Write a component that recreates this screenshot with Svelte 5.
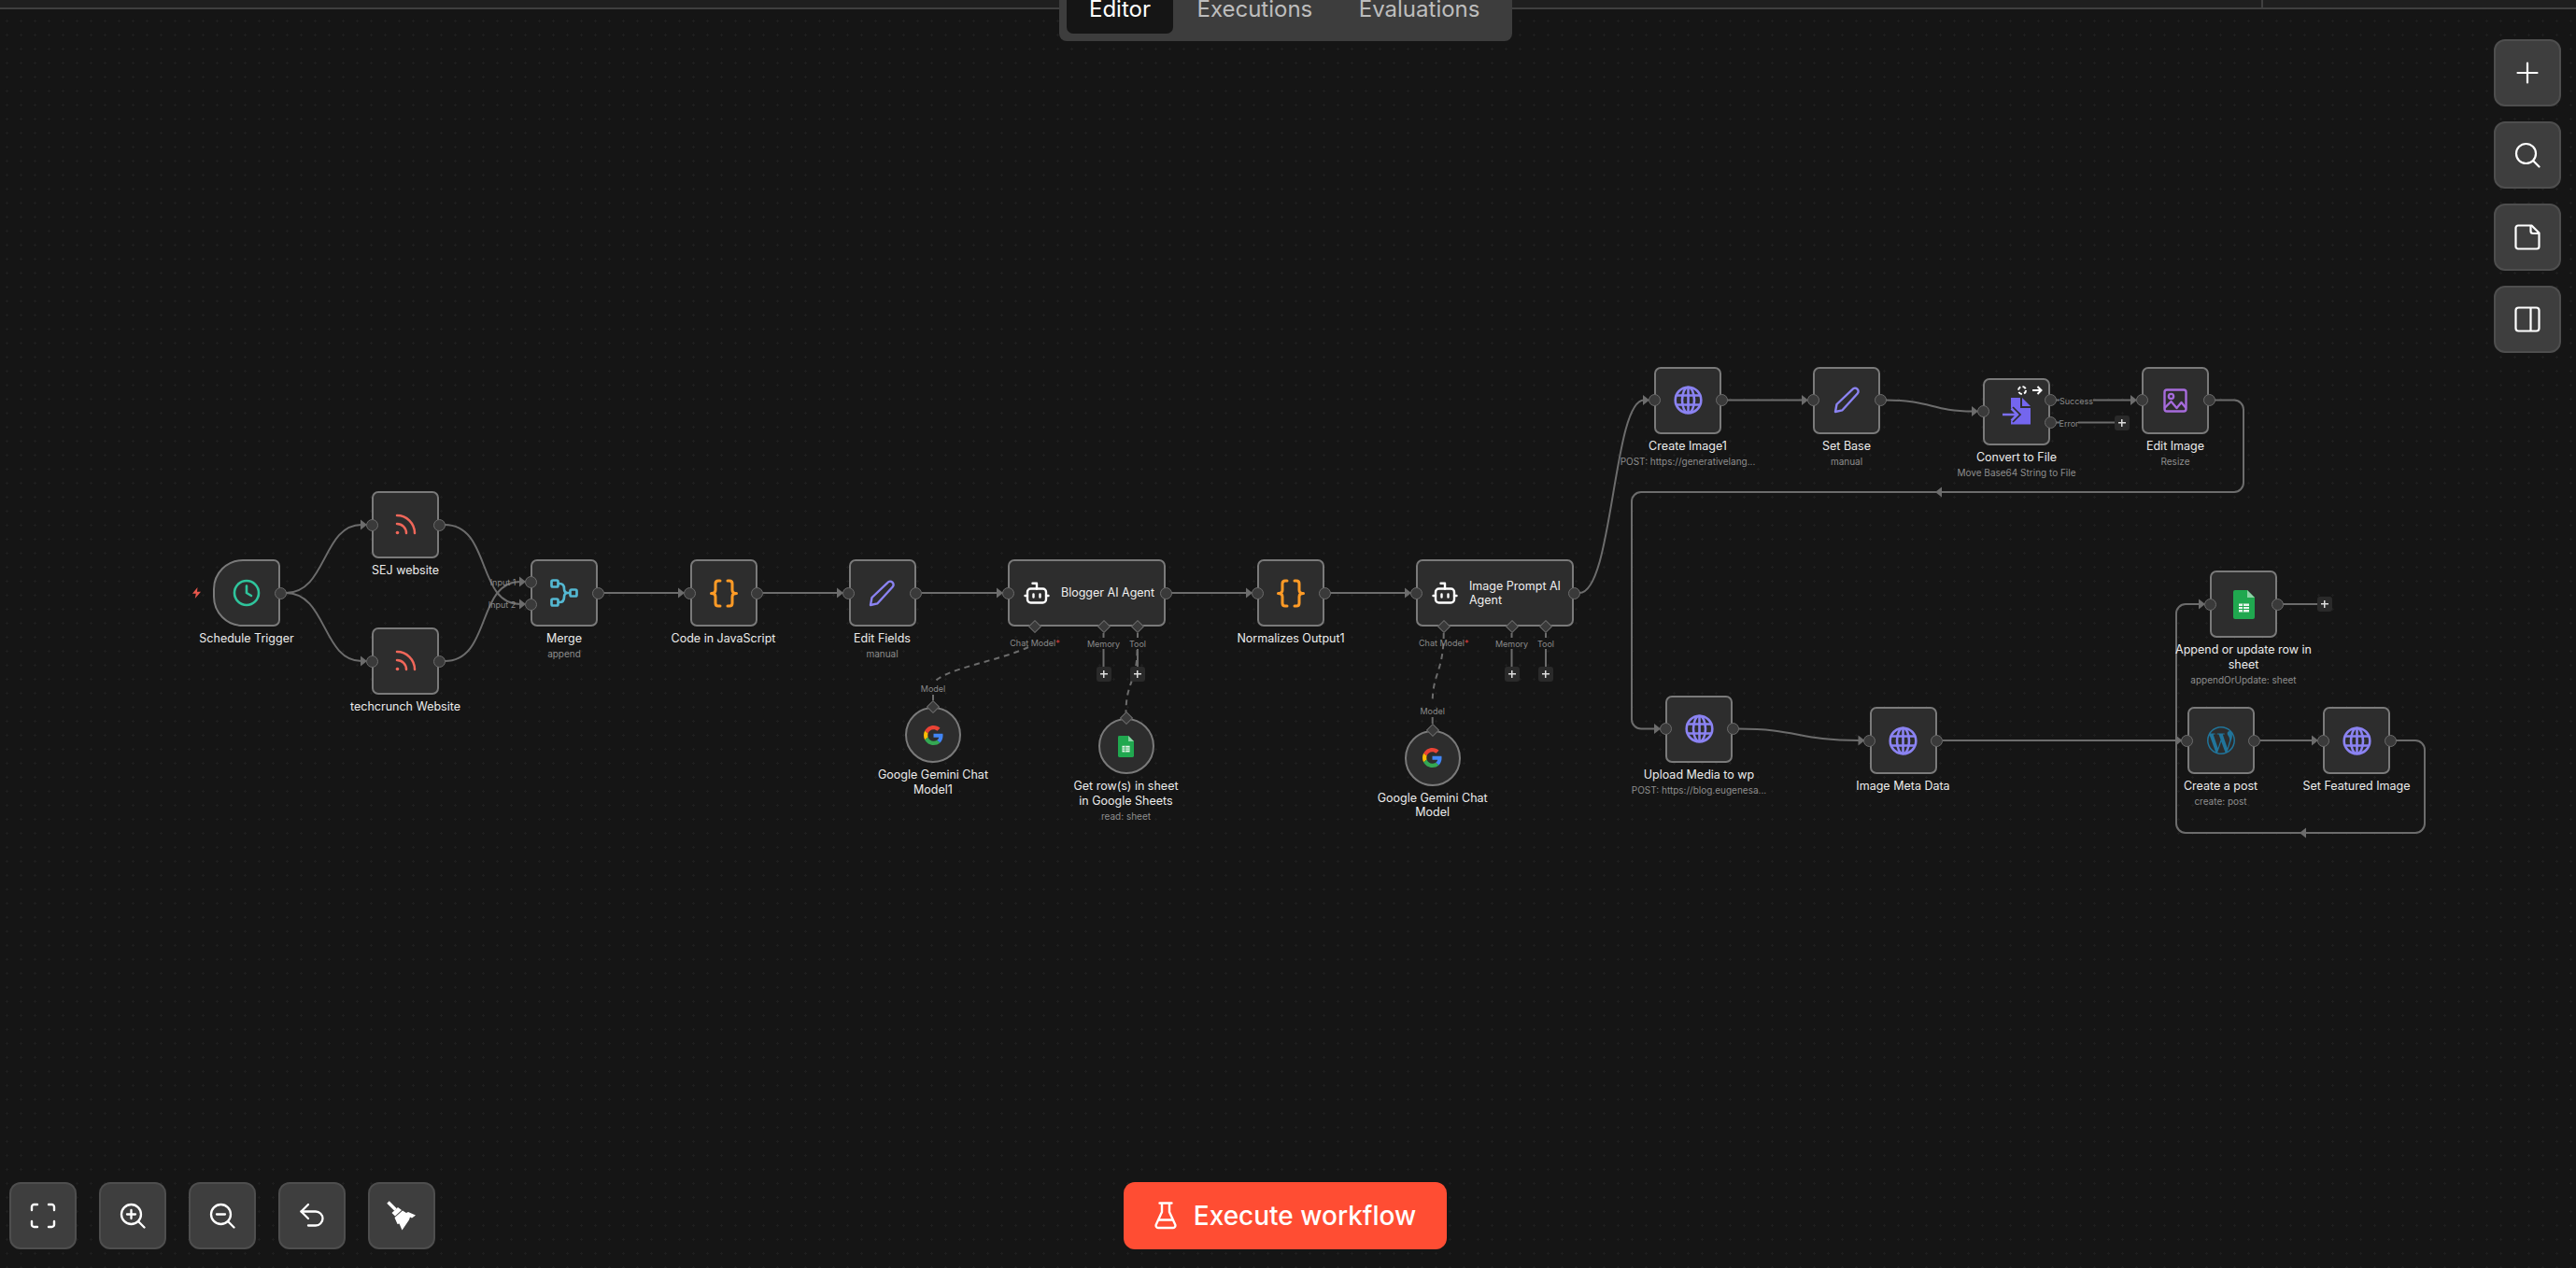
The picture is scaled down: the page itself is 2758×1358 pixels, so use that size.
<script>
  const nodes = [
    { name: "Schedule Trigger", x: 228, y: 599, icon: "clock", trigger: true, noIn: true },
    { name: "SEJ website", x: 398, y: 526, icon: "rss" },
    { name: "techcrunch Website", x: 398, y: 672, icon: "rss" },
    { name: "Merge", sub: "append", x: 568, y: 599, icon: "merge", ins: [24, 48] },
    { name: "Code in JavaScript", x: 738.5, y: 599, icon: "code" },
    { name: "Edit Fields", sub: "manual", x: 908.5, y: 599, icon: "pen" },
    { name: "Blogger AI Agent", x: 1079, y: 599, w: 169, agent: true, subs: [29, 102.5, 138.5] },
    { name: "Normalizes Output1", x: 1346, y: 599, icon: "code" },
    { name: "Image Prompt AI\nAgent", x: 1516, y: 599, w: 169, agent: true, subs: [29.5, 102.5, 139] },
    { name: "Create Image1", sub: "POST: https://generativelang...", x: 1771, y: 392.5, icon: "globe" },
    { name: "Set Base", sub: "manual", x: 1941, y: 392.5, icon: "pen" },
    { name: "Convert to File", sub: "Move Base64 String to File", x: 2123, y: 404.5, icon: "convert", outs: [24, 48], busy: true },
    { name: "Edit Image", sub: "Resize", x: 2293, y: 392.5, icon: "image" },
    { name: "Upload Media to wp", sub: "POST: https://blog.eugenesa...", x: 1783, y: 744.5, icon: "globe" },
    { name: "Image Meta Data", x: 2001.5, y: 757, icon: "globe" },
    { name: "Append or update row in\nsheet", sub: "appendOrUpdate: sheet", x: 2366, y: 611, icon: "sheets" },
    { name: "Create a post", sub: "create: post", x: 2341.5, y: 757, icon: "wp" },
    { name: "Set Featured Image", x: 2487, y: 757, icon: "globe" },
    { name: "Google Gemini Chat\nModel1", x: 969, y: 757, icon: "google", circle: true },
    { name: "Get row(s) in sheet\nin Google Sheets", sub: "read: sheet", x: 1175.5, y: 769, icon: "sheetsSm", circle: true },
    { name: "Google Gemini Chat\nModel", x: 1503.7, y: 781.5, icon: "google", circle: true },
  ];

  const edges = [
    "M306 635 C350 635 345 562 387 562",
    "M306 635 C350 635 345 708 387 708",
    "M476 562 C526 562 510 647 557 647",
    "M476 708 C526 708 510 623 557 623",
    "M647 635 H727",
    "M817 635 H897",
    "M987 635 H1068",
    "M1254 635 H1335",
    "M1424 635 H1505",
    "M1691 635 C1727 635 1727 428.5 1760 428.5",
    "M1849 428.5 H1930",
    "M2019 428.5 C2068 428.5 2068 440.5 2112 440.5",
    "M2241 428.5 H2282",
    "M2225 452.5 H2264",
    "M2371 428.5 H2392 a10 10 0 0 1 10 10 V517 a10 10 0 0 1 -10 10 H1757 a10 10 0 0 0 -10 10 V770.5 a10 10 0 0 0 10 10 H1772",
    "M1861 780.5 C1925 780.5 1925 793 1990 793",
    "M2080 793 H2330",
    "M2420 793 H2476",
    "M2444 647 H2481",
    "M2565 793 H2586 a10 10 0 0 1 10 10 V882 a10 10 0 0 1 -10 10 H2340 a10 10 0 0 1 -10 -10 V657 a10 10 0 0 1 10 -10 H2355",
    "M1181.5 678 V683 M1181.5 695 V714",
    "M1218 678 V683 M1218 695 V714",
    "M1618.5 678 V683 M1618.5 695 V714",
    "M1655 678 V683 M1655 695 V714",
    "M999 744 V750",
    "M1533.7 768 V775",
    "M2201 428.5 H2205",
    "M2201 452.5 H2205",
  ];

  const dashed = [
    "M1101 693 C1070 708 1010 716 999 732",
    "M1217.5 696 C1217.5 730 1205.5 730 1205.5 763",
    "M1545.7 678 C1545.7 720 1533.7 720 1533.7 753",
  ];

  // arrow tips, dir 1 = pointing right, -1 = left
  const arrows = [
    [393, 562, 1], [393, 708, 1], [563, 623, 1], [563, 647, 1],
    [733, 635, 1], [903, 635, 1], [1074, 635, 1], [1341, 635, 1], [1511, 635, 1],
    [1766, 428.5, 1], [1936, 428.5, 1], [2118, 440.5, 1], [2288, 428.5, 1],
    [1778, 780.5, 1], [1996.5, 793, 1], [2336.5, 793, 1], [2482, 793, 1], [2361, 647, 1],
    [2072, 527, -1], [2462, 892, -1],
  ];

  const portLabels = [
    { t: "Input 1", x: 538.5, y: 623 },
    { t: "Input 2", x: 537.5, y: 647 },
    { t: "Chat Model", star: true, x: 1108, y: 688 },
    { t: "Memory", x: 1181.5, y: 689 },
    { t: "Tool", x: 1218, y: 689 },
    { t: "Model", x: 999, y: 737 },
    { t: "Chat Model", star: true, x: 1545.7, y: 688 },
    { t: "Memory", x: 1618.5, y: 689 },
    { t: "Tool", x: 1655, y: 689 },
    { t: "Model", x: 1533.7, y: 761 },
    { t: "Success", x: 2223, y: 428.5 },
    { t: "Error", x: 2215, y: 452.5 },
  ];

  const plusBoxes = [
    [1181.5, 722], [1218, 722], [1618.5, 722], [1655, 722], [2272, 452.5], [2489, 647],
  ];

  const tabs = ["Editor", "Executions", "Evaluations"];
</script>

{#snippet icon(name)}
  {#if name === "clock"}
    <svg width="30" height="30" viewBox="0 0 30 30" fill="none" stroke="#2fc49c" stroke-width="2.6" stroke-linecap="round" stroke-linejoin="round"><circle cx="15" cy="15" r="13"/><path d="M15 7.5V15l5 3"/></svg>
  {:else if name === "rss"}
    <svg width="24" height="24" viewBox="0 0 24 24" fill="none" stroke="#f0675a" stroke-width="2.5" stroke-linecap="round"><path d="M3 11a10 10 0 0 1 10 10"/><path d="M3 2a19 19 0 0 1 19 19"/><circle cx="3.5" cy="20.5" r="1.8" fill="#f0675a" stroke="none"/></svg>
  {:else if name === "merge"}
    <svg width="30" height="30" viewBox="0 0 30 30" fill="none" stroke="#54b8d2" stroke-width="2.7" stroke-linejoin="round"><rect x="1.5" y="1.5" width="7" height="7" rx="1.5"/><rect x="1.5" y="21.5" width="7" height="7" rx="1.5"/><rect x="21.5" y="11.5" width="7" height="7" rx="1.5"/><path d="M8.5 5h1.5c3.500 0 5 2.500 5 5.500 0 2.800 1.500 4.500 4 4.500h2.500M8.500 25h1.500c3.500 0 5-2.500 5-5.500 0-2.800 1.500-4.500 4-4.500"/></svg>
  {:else if name === "code"}
    <svg width="30" height="31" viewBox="0 0 30 31" fill="none" stroke="#ff9b26" stroke-width="3" stroke-linecap="round" stroke-linejoin="round"><path d="M11 2H9C7 2 6 3 6 5v7c0 2-1.500 3.500-4.500 3.500C4.500 15.500 6 17 6 19v7c0 2 1 3 3 3h2"/><path d="M19 2h2c2 0 3 1 3 3v7c0 2 1.500 3.500 4.500 3.500C25.500 15.500 24 17 24 19v7c0 2-1 3-3 3h-2"/></svg>
  {:else if name === "pen"}
    <svg width="29" height="29" viewBox="0 0 29 29" fill="none" stroke="#8b83f2" stroke-width="2.4" stroke-linejoin="round"><path d="M2 27l1.500-8L20.500 2.800a3.500 3.500 0 0 1 5.200 4.700L9.500 25.300z"/></svg>
  {:else if name === "globe"}
    <svg width="31" height="31" viewBox="0 0 31 31" fill="none" stroke="#8b83f2" stroke-width="2.6"><circle cx="15.500" cy="15.500" r="13.800"/><ellipse cx="15.500" cy="15.500" rx="6.500" ry="13.800"/><path d="M15.500 2v27M3 10.500h25M3 20.500h25"/></svg>
  {:else if name === "image"}
    <svg width="26" height="26" viewBox="0 0 26 26" fill="none" stroke="#a66bdc" stroke-width="2.4" stroke-linejoin="round"><rect x="1.500" y="1.500" width="23" height="23" rx="2.500"/><circle cx="8.500" cy="8.500" r="2.600"/><path d="M1.500 21l7-7 6 7 5-6 5 6"/></svg>
  {:else if name === "convert"}
    <svg width="32" height="29" viewBox="0 0 32 29"><path d="M10 0h10v11h11v17.500H10z" fill="#7466ee"/><path d="M22 0l9 9h-9z" fill="#7466ee"/><path d="M1 18h15M10.500 11.500l6.500 6.500-6.500 6.500" fill="none" stroke="#2d2d2d" stroke-width="6"/><path d="M1 18h15M10.500 11.500l6.500 6.500-6.500 6.500" fill="none" stroke="#7b6ef2" stroke-width="2.600"/></svg>
  {:else if name === "sheets"}
    <svg width="23" height="31" viewBox="0 0 23 31"><path d="M2 0h13l8 8v21a2 2 0 0 1-2 2H2a2 2 0 0 1-2-2V2a2 2 0 0 1 2-2z" fill="#20a84f"/><path d="M15 0l8 8h-8z" fill="#8ed3a6"/><path d="M6 14.500h11v9H6z" fill="#e8f5ec"/><path d="M6 17.500h11M6 20.500h11M10.500 14.500v9" stroke="#20a84f" stroke-width="1"/></svg>
  {:else if name === "sheetsSm"}
    <svg width="17" height="23" viewBox="0 0 23 31"><path d="M2 0h13l8 8v21a2 2 0 0 1-2 2H2a2 2 0 0 1-2-2V2a2 2 0 0 1 2-2z" fill="#20a84f"/><path d="M15 0l8 8h-8z" fill="#8ed3a6"/><path d="M6 14.500h11v9H6z" fill="#e8f5ec"/><path d="M6 17.500h11M6 20.500h11M10.500 14.500v9" stroke="#20a84f" stroke-width="1"/></svg>
  {:else if name === "wp"}
    <svg width="30" height="30" viewBox="0 0 24 24" fill="#21759b"><path d="M21.469 6.825c.84 1.537 1.318 3.3 1.318 5.175 0 3.979-2.156 7.456-5.363 9.325l3.295-9.527c.615-1.54.82-2.771.82-3.864 0-.405-.026-.78-.07-1.11m-7.981.105c.647-.03 1.232-.105 1.232-.105.582-.075.514-.93-.067-.899 0 0-1.755.135-2.88.135-1.064 0-2.85-.15-2.85-.15-.585-.03-.661.855-.075.885 0 0 .54.061 1.125.09l1.68 4.605-2.37 7.08L5.354 6.9c.649-.03 1.234-.1 1.234-.1.585-.075.516-.93-.065-.896 0 0-1.746.138-2.874.138-.2 0-.438-.008-.69-.015C4.911 3.15 8.235 1.215 12 1.215c2.809 0 5.365 1.072 7.286 2.833-.046-.003-.091-.009-.141-.009-1.06 0-1.812.923-1.812 1.914 0 .89.513 1.643 1.06 2.531.411.72.89 1.643.89 2.977 0 .915-.354 1.994-.821 3.479l-1.075 3.585-3.9-11.61.001.014zM12 22.784c-1.059 0-2.081-.153-3.048-.437l3.237-9.406 3.315 9.087c.024.053.05.101.078.149-1.12.393-2.325.609-3.582.609M1.211 12c0-1.564.336-3.05.935-4.39L7.29 21.709C3.694 19.96 1.212 16.271 1.211 12M12 0C5.385 0 0 5.385 0 12s5.385 12 12 12 12-5.385 12-12S18.615 0 12 0"/></svg>
  {:else if name === "google"}
    <svg width="21" height="21" viewBox="0 0 48 48"><path fill="#EA4335" d="M24 9.500c3.540 0 6.710 1.220 9.210 3.600l6.850-6.850C35.900 2.380 30.470 0 24 0 14.620 0 6.510 5.380 2.560 13.220l7.980 6.190C12.430 13.720 17.740 9.500 24 9.500z"/><path fill="#4285F4" d="M46.980 24.550c0-1.570-.15-3.090-.38-4.550H24v9.020h12.940c-.58 2.960-2.260 5.480-4.780 7.180l7.730 6c4.510-4.180 7.090-10.360 7.090-17.650z"/><path fill="#FBBC05" d="M10.530 28.590c-.48-1.450-.76-2.990-.76-4.590s.27-3.140.76-4.590l-7.980-6.190C.92 16.460 0 20.120 0 24c0 3.880.92 7.540 2.560 10.780l7.970-6.190z"/><path fill="#34A853" d="M24 48c6.480 0 11.930-2.130 15.890-5.810l-7.730-6c-2.150 1.450-4.920 2.300-8.160 2.300-6.260 0-11.570-4.220-13.470-9.910l-7.980 6.190C6.510 42.620 14.620 48 24 48z"/></svg>
  {:else if name === "robot"}
    <svg width="28" height="24" viewBox="0 0 28 24" fill="none" stroke="#fff" stroke-width="2.400" stroke-linecap="round" stroke-linejoin="round"><rect x="4" y="7.500" width="20" height="15" rx="3.500"/><path d="M14 7.500V1.800H9.500M1.500 15h2.500M24 15h2.500M10.500 13.500v3M17.500 13.500v3"/></svg>
  {/if}
{/snippet}

<div class="app">
  <div class="canvas">
    <svg class="edges" width="2758" height="1358" viewBox="0 0 2758 1358">
      {#each edges as d}
        <path {d} class="edge" />
      {/each}
      {#each dashed as d}
        <path {d} class="edge dash" />
      {/each}
      {#each arrows as [x, y, dir]}
        <polygon points="{x},{y} {x - 7 * dir},{y - 5.5} {x - 7 * dir},{y + 5.5}" class="arrow" />
      {/each}
    </svg>

    {#each nodes as n}
      <div
        class="node"
        class:circle={n.circle}
        class:trigger={n.trigger}
        class:agent={n.agent}
        style="left: {n.x}px; top: {n.y}px{n.w ? `; width: ${n.w}px` : ''}"
      >
        {#if n.agent}
          {@render icon("robot")}
          <span class="agent-name">{n.name}</span>
        {:else}
          {@render icon(n.icon)}
        {/if}

        {#if n.circle}
          <span class="diamond on-top"></span>
        {:else}
          {#if !n.noIn}
            {#each n.ins ?? [36] as top}
              <span class="port in" style="top: {top}px"></span>
            {/each}
          {/if}
          {#each n.outs ?? [36] as top}
            <span class="port out" style="top: {top}px"></span>
          {/each}
        {/if}
        {#each n.subs ?? [] as left}
          <span class="diamond on-bottom" style="left: {left}px"></span>
        {/each}

        {#if n.trigger}
          <svg class="bolt" width="11" height="12" viewBox="0 0 11 12"><path d="M6.500 0L1 6.800h3.800L3.800 12 10 4.800H6z" fill="#e8574c"/></svg>
        {/if}
        {#if n.busy}
          <div class="node-status">
            <svg width="12" height="12" viewBox="0 0 12 12" fill="none" stroke="#fff" stroke-width="2" stroke-dasharray="4 2.300"><circle cx="6" cy="6" r="4"/></svg>
            <svg width="12" height="12" viewBox="0 0 12 12" fill="none" stroke="#fff" stroke-width="2"><path d="M1 6h9M6.500 2l4 4-4 4"/></svg>
          </div>
        {/if}

        {#if !n.agent}
          <div class="caption">
            <div class="label">{n.name}</div>
            {#if n.sub}<div class="sub">{n.sub}</div>{/if}
          </div>
        {/if}
      </div>
    {/each}

    {#each portLabels as l}
      <span class="port-label" style="left: {l.x}px; top: {l.y}px">{l.t}{#if l.star}<i>*</i>{/if}</span>
    {/each}

    {#each plusBoxes as [x, y]}
      <span class="plus" style="left: {x}px; top: {y}px"></span>
    {/each}
  </div>

  <header class="topbar">
    <span class="divider"></span>
  </header>

  <nav class="tabs">
    {#each tabs as t, i}
      <div class="tab" class:active={i === 0}>{t}</div>
    {/each}
  </nav>

  <div class="tools-right">
    <button class="tool" aria-label="add">
      <svg width="28" height="28" viewBox="0 0 28 28" fill="none" stroke="#fff" stroke-width="2.200" stroke-linecap="round"><path d="M14 3.500v21M3.500 14h21"/></svg>
    </button>
    <button class="tool" aria-label="search">
      <svg width="28" height="28" viewBox="0 0 28 28" fill="none" stroke="#fff" stroke-width="2.200" stroke-linecap="round"><circle cx="12.500" cy="12.500" r="10.500"/><path d="M20.500 20.500l6 6"/></svg>
    </button>
    <button class="tool" aria-label="sticky note">
      <svg width="28" height="28" viewBox="0 0 28 28" fill="none" stroke="#fff" stroke-width="2.200" stroke-linejoin="round"><path d="M4 1.500h14.500l8 8V24a2.500 2.500 0 0 1-2.500 2.500H4A2.500 2.500 0 0 1 1.500 24V4A2.500 2.500 0 0 1 4 1.500z"/><path d="M17.500 1.500v6a2.500 2.500 0 0 0 2.500 2.500h6.500"/></svg>
    </button>
    <button class="tool" aria-label="panel">
      <svg width="28" height="28" viewBox="0 0 28 28" fill="none" stroke="#fff" stroke-width="2.200"><rect x="1.500" y="1.500" width="25" height="25" rx="3"/><path d="M17.500 1.500v25"/></svg>
    </button>
  </div>

  <div class="tools-left">
    <button class="tool" aria-label="fit">
      <svg width="28" height="28" viewBox="0 0 28 28" fill="none" stroke="#fff" stroke-width="2.400" stroke-linecap="round"><path d="M2 8V4.500A2.500 2.500 0 0 1 4.500 2H8M20 2h3.500A2.500 2.500 0 0 1 26 4.500V8M26 20v3.500a2.500 2.500 0 0 1-2.500 2.500H20M8 26H4.500A2.500 2.500 0 0 1 2 23.500V20"/></svg>
    </button>
    <button class="tool" aria-label="zoom in">
      <svg width="28" height="28" viewBox="0 0 28 28" fill="none" stroke="#fff" stroke-width="2.300" stroke-linecap="round"><circle cx="12.500" cy="12.500" r="10.500"/><path d="M20.500 20.500l6 6M12.500 8v9M8 12.500h9"/></svg>
    </button>
    <button class="tool" aria-label="zoom out">
      <svg width="28" height="28" viewBox="0 0 28 28" fill="none" stroke="#fff" stroke-width="2.300" stroke-linecap="round"><circle cx="12.500" cy="12.500" r="10.500"/><path d="M20.500 20.500l6 6M8 12.500h9"/></svg>
    </button>
    <button class="tool" aria-label="undo">
      <svg width="28" height="28" viewBox="0 0 28 28" fill="none" stroke="#fff" stroke-width="2.300" stroke-linecap="round" stroke-linejoin="round"><path d="M10 2L2.500 9.500 10 17"/><path d="M2.500 9.500H18a7.500 7.500 0 0 1 0 15H10"/></svg>
    </button>
    <button class="tool" aria-label="tidy up">
      <svg width="32" height="32" viewBox="0 0 32 32" fill="#fff"><path d="M1.500 1.500l8 8" stroke="#fff" stroke-width="3.600"/><path d="M5.500 13l6.500-6 4 3-7 6.500z"/><path d="M8.500 18l8.500-7.500 4 2.500 2-1 8 3.500-4 3-2-1-1 3-7.500 11-3-7-2 .5z"/></svg>
    </button>
  </div>

  <button class="execute">
    <svg width="24" height="30" viewBox="0 0 24 30" fill="none" stroke="#fff" stroke-width="2.400" stroke-linecap="round" stroke-linejoin="round"><path d="M5.500 1.500h13M8 1.500V11L1.800 24.500A2.500 2.500 0 0 0 4 28h16a2.500 2.500 0 0 0 2.200-3.500L16 11V1.500M5.500 19.500h13"/></svg>
    Execute workflow
  </button>
</div>

<style>
  :global(body) {
    margin: 0;
    background: #151515;
    overflow: hidden;
  }
  .app {
    position: relative;
    width: 100vw;
    height: 100vh;
    overflow: hidden;
    font-family: "Inter", "Liberation Sans", sans-serif;
  }
  .canvas {
    position: absolute;
    inset: 0;
    background-color: #151515;
    background-image: radial-gradient(circle, #1f1f1f 1px, transparent 1.4px);
    background-size: 15px 15px;
  }
  .edges {
    position: absolute;
    inset: 0;
  }
  .edge {
    fill: none;
    stroke: #6c6c6c;
    stroke-width: 2;
  }
  .dash {
    stroke-dasharray: 6 5;
  }
  .arrow {
    fill: #6c6c6c;
  }
  .node {
    position: absolute;
    box-sizing: border-box;
    width: 72px;
    height: 72px;
    display: flex;
    align-items: center;
    justify-content: center;
    background: #2d2d2d;
    border: 2px solid #7a7a7a;
    border-radius: 7px;
  }
  .node.trigger {
    border-radius: 32px 7px 7px 32px;
  }
  .node.circle {
    width: 60px;
    height: 60px;
    border-radius: 50%;
  }
  .node.agent {
    justify-content: flex-start;
    gap: 12px;
    padding-left: 15px;
  }
  .agent-name {
    color: #f0f0f0;
    font-size: 12.5px;
    font-weight: 400;
    line-height: 15.5px;
    white-space: pre;
  }
  .port {
    position: absolute;
    box-sizing: border-box;
    width: 13px;
    height: 13px;
    margin: -8.5px 0 0 -6.5px;
    border-radius: 50%;
    background: #3a3a3a;
    border: 1.5px solid #6c6c6c;
  }
  .port.in {
    left: -2px;
  }
  .port.out {
    left: calc(100% + 2px);
  }
  .diamond {
    position: absolute;
    box-sizing: border-box;
    width: 10px;
    height: 10px;
    margin: -5px 0 0 -7px;
    background: #3a3a3a;
    border: 1.5px solid #6c6c6c;
    transform: rotate(45deg);
  }
  .diamond.on-top {
    left: 30px;
    top: -2px;
  }
  .diamond.on-bottom {
    top: calc(100% + 2px);
  }
  .bolt {
    position: absolute;
    left: -25px;
    top: 28px;
  }
  .node-status {
    position: absolute;
    right: 6px;
    top: 5px;
    display: flex;
    gap: 4px;
  }
  .caption {
    position: absolute;
    top: calc(100% + 7.3px);
    left: 50%;
    transform: translateX(-50%);
    text-align: center;
  }
  .label {
    color: #ececec;
    font-size: 12.5px;
    font-weight: 400;
    line-height: 15.5px;
    white-space: pre;
  }
  .sub {
    margin-top: 1.4px;
    color: #8e8e8e;
    font-size: 10px;
    line-height: 15px;
    white-space: pre;
  }
  .port-label {
    position: absolute;
    transform: translate(-50%, -50%);
    color: #8a8a8a;
    font-size: 9px;
    white-space: nowrap;
  }
  .port-label i {
    color: #e04040;
    font-style: normal;
  }
  .plus {
    position: absolute;
    box-sizing: border-box;
    width: 16px;
    height: 16px;
    margin: -8px 0 0 -8px;
    border-radius: 3px;
    background-color: #2a2a2a;
    background-image: linear-gradient(#ddd, #ddd), linear-gradient(#ddd, #ddd);
    background-size: 8px 1.5px, 1.5px 8px;
    background-position: center;
    background-repeat: no-repeat;
  }
  .topbar {
    position: relative;
    height: 8px;
    background: #1f1f1f;
    border-bottom: 2px solid #3f3f3f;
  }
  .divider {
    position: absolute;
    left: 2421px;
    top: 0;
    bottom: 0;
    width: 2px;
    background: #3f3f3f;
  }
  .tabs {
    position: absolute;
    left: 1134px;
    top: 0;
    height: 44px;
    box-sizing: border-box;
    display: flex;
    align-items: flex-start;
    gap: 1.5px;
    padding: 0 11px 0 8px;
    background: #3d3d3d;
    border-radius: 0 0 8px 8px;
  }
  .tab {
    height: 36px;
    box-sizing: border-box;
    padding: 0.5px 24px 0;
    color: #bdbdbd;
    font-size: 24px;
    line-height: 18px;
    border-radius: 0 0 7px 7px;
  }
  .tab.active {
    background: #151515;
    color: #fff;
  }
  .tools-right {
    position: absolute;
    top: 42px;
    right: 16px;
    display: flex;
    flex-direction: column;
    gap: 16px;
  }
  .tools-left {
    position: absolute;
    left: 10px;
    bottom: 20px;
    display: flex;
    gap: 24px;
  }
  .tool {
    width: 72px;
    height: 72px;
    box-sizing: border-box;
    display: flex;
    align-items: center;
    justify-content: center;
    padding: 0;
    background: #3e3e3e;
    border: 2px solid #4e4e4e;
    border-radius: 12px;
  }
  .execute {
    position: absolute;
    left: 1203px;
    bottom: 20px;
    width: 346px;
    height: 72px;
    display: flex;
    align-items: center;
    justify-content: center;
    gap: 18px;
    padding: 0;
    border: none;
    border-radius: 12px;
    background: #ff4d33;
    color: #fff;
    font-family: inherit;
    font-size: 28px;
    font-weight: 500;
  }
</style>
